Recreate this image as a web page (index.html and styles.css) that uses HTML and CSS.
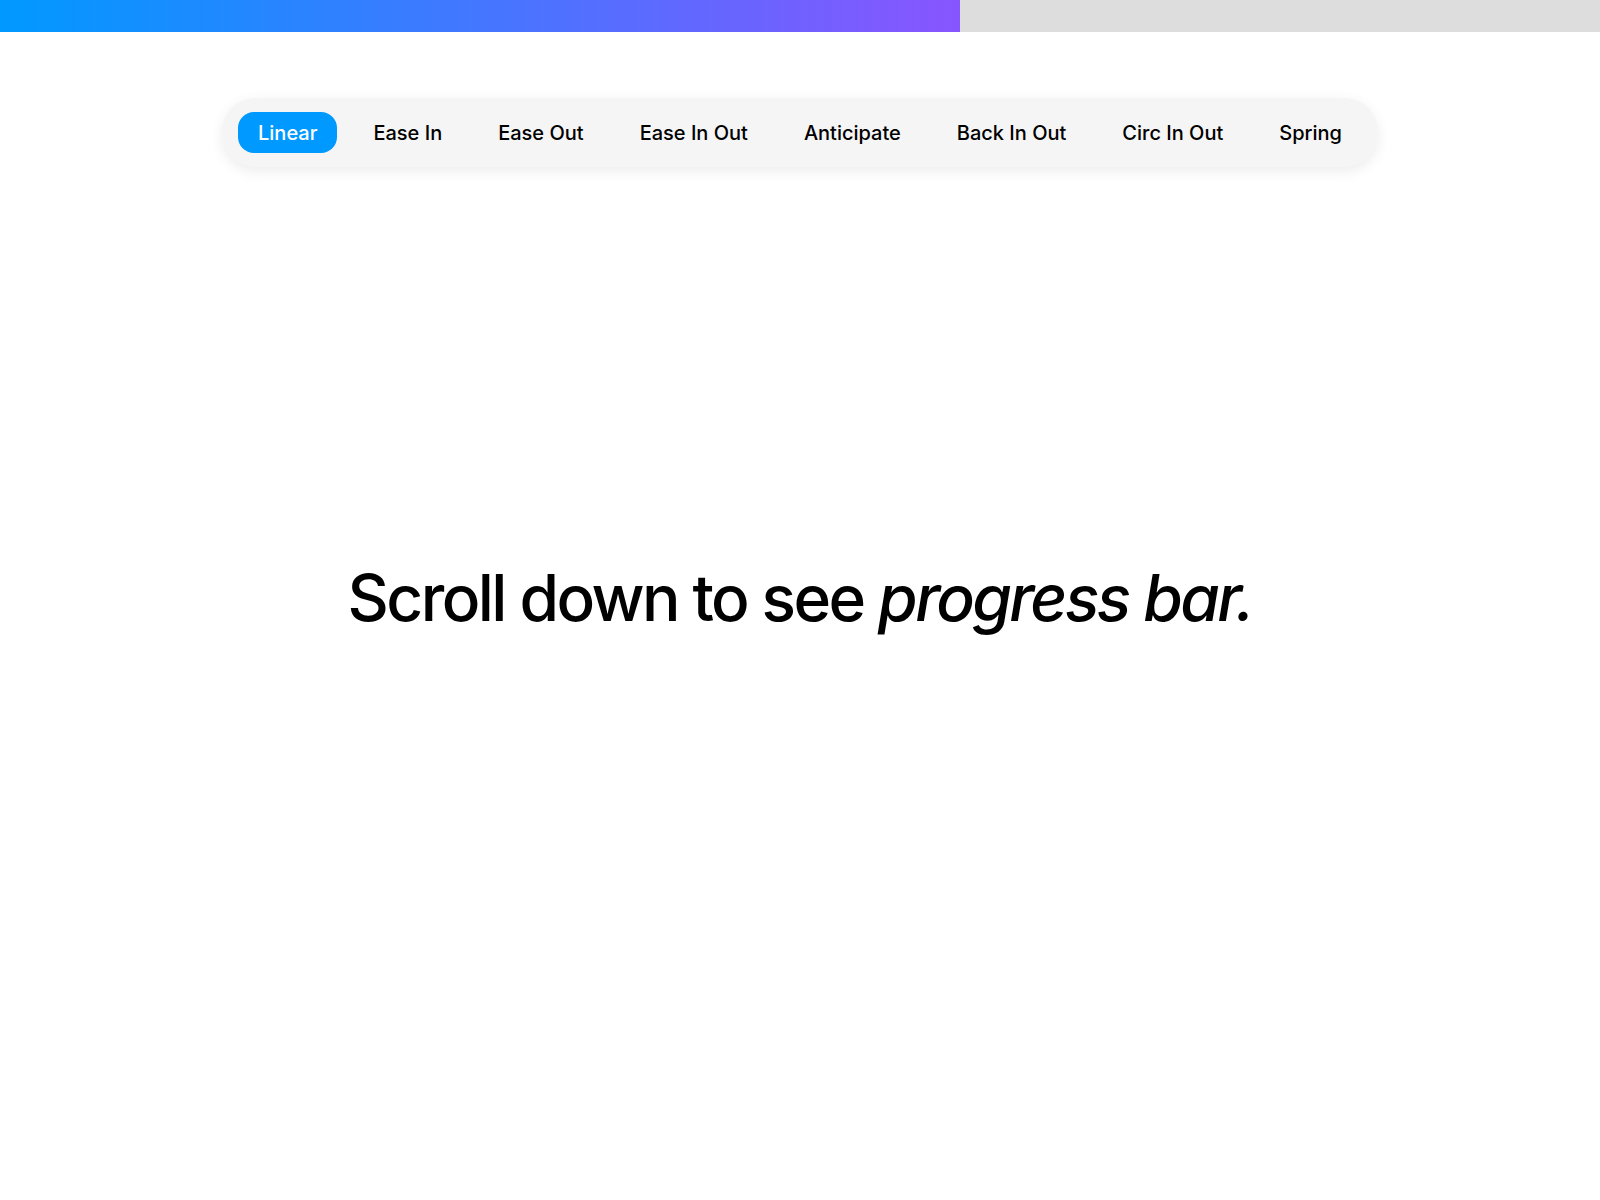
FILE: index.html
```html
<!DOCTYPE html>
<html lang="en">
<head>
<meta charset="utf-8">
<title>Scroll progress</title>
<link rel="stylesheet" href="styles.css">
</head>
<body>
<div class="progress">
  <div class="progress-fill" style="width: 60%"></div>
</div>
<nav class="tabs">
  <button class="tab active">Linear</button>
  <button class="tab">Ease In</button>
  <button class="tab">Ease Out</button>
  <button class="tab">Ease In Out</button>
  <button class="tab">Anticipate</button>
  <button class="tab">Back In Out</button>
  <button class="tab">Circ In Out</button>
  <button class="tab">Spring</button>
</nav>
<main class="hero">
  <h1 class="title">Scroll down to see <em>progress bar.</em></h1>
</main>
</body>
</html>
```
FILE: styles.css
```css
* { box-sizing: border-box; }
html, body { margin: 0; padding: 0; }
body {
  background: #ffffff;
  font-family: Inter, "Noto Sans", sans-serif;
  color: #000;
  width: 1600px;
  height: 1200px;
  overflow: hidden;
  display: flex;
  flex-direction: column;
  align-items: center;
}
.progress {
  width: 100%;
  height: 32px;
  background: #dddddd;
  display: flex;
}
.progress-fill {
  height: 100%;
  background: linear-gradient(90deg, #0099ff 0%, #8855ff 100%);
}
.tabs {
  margin-top: 66px;
  display: flex;
  align-items: center;
  gap: 16px;
  padding: 14px 16px;
  background: #f5f5f5;
  border-radius: 34px;
  box-shadow: 0 4px 14px rgba(0,0,0,0.08);
}
.tab {
  font-family: Inter, "Noto Sans", sans-serif;
  font-size: 20px;
  font-weight: 450;
  color: #000;
  background: transparent;
  border: none;
  height: 41px;
  padding: 0 20px;
  border-radius: 16px;
  cursor: pointer;
}
.tab.active {
  background: #0099ff;
  color: #fff;
}
.hero {
  flex: 1;
  display: flex;
  align-items: center;
  justify-content: center;
  padding-bottom: 172px;
}
.title {
  margin: 0;
  font-size: 64px;
  font-weight: 500;
  letter-spacing: -0.04em;
}
.title em {
  font-style: italic;
}
```
